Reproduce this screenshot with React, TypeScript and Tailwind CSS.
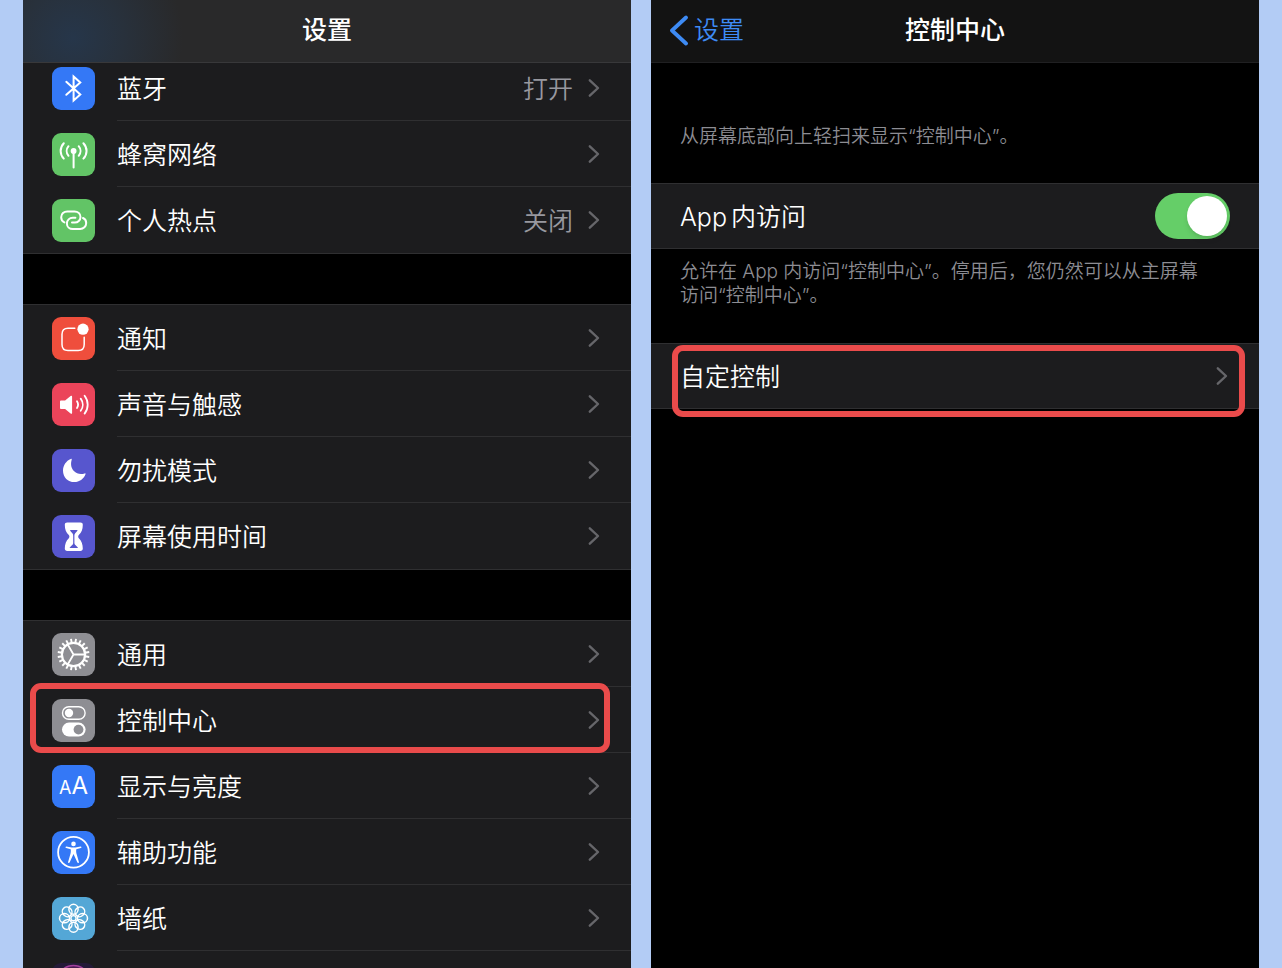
import type { ReactNode } from 'react';

const fontFamily = 'Inter, "Noto Sans CJK SC", sans-serif';

function Glyph({ children }: { children: ReactNode }) {
  return (
    <svg
      viewBox="0 0 43 43"
      className="size-full"
      fill="none"
      stroke="white"
      strokeWidth="2"
      strokeLinecap="round"
      strokeLinejoin="round"
      aria-hidden="true"
    >
      {children}
    </svg>
  );
}

function BluetoothGlyph() {
  return (
    <Glyph>
      <path d="M14.3 14.8 28.3 27.4 21.6 33.4V9.4l6.7 6.1-14 12.3" strokeLinejoin="miter" />
    </Glyph>
  );
}

function CellularGlyph() {
  return (
    <Glyph>
      <circle cx="21.6" cy="18" r="2.9" fill="white" stroke="none" />
      <path d="M21.6 18v16.4" />
      <path d="M16.5 13.2c-2.4 2.8-2.4 6.8 0 9.6M26.7 13.2c2.4 2.8 2.4 6.8 0 9.6" />
      <path d="M11.8 10.2c-4.2 4.4-4.2 11 0 15.4M31.4 10.2c4.2 4.4 4.2 11 0 15.4" />
    </Glyph>
  );
}

function HotspotGlyph() {
  const loop =
    'M12.4 23.4C10.3 22.6 9.2 20.6 9.2 18.3c0-3.4 2.7-5.900 6.100-5.900h7.200c3.400 0 6 2.400 6 5.600s-2.600 5.600-5.800 5.600H20';
  return (
    <Glyph>
      <path d={loop} />
      <path d={loop} transform="rotate(180 21.7 21.2)" />
    </Glyph>
  );
}

function NotificationGlyph() {
  return (
    <Glyph>
      <path d="M22.8 11.2H16c-4 0-6 2-6 6v10.2c0 4 2 6 6 6h10.200c4 0 6-2 6-6V20.200" strokeWidth="1.5" />
      <circle cx="31" cy="12.2" r="5.6" fill="white" stroke="none" />
    </Glyph>
  );
}

function SoundGlyph() {
  return (
    <Glyph>
      <path
        d="M9.3 17.4h3.8l5.5-4.3c.8-.6 1.5-.3 1.5.6v16.2c0 .9-.7 1.2-1.5.6l-5.5-4.5H9.3c-.9 0-1.3-.5-1.3-1.3v-6c0-.8.4-1.3 1.3-1.3z"
        fill="white"
        stroke="none"
      />
      <path
        d="M25 18.3c1.3 2 1.3 4.8 0 6.8M28.7 15.6c2.7 3.6 2.7 8.6 0 12.2M32.6 12.8c4.1 5.3 4.1 12.500 0 17.800"
        strokeWidth="1.8"
      />
    </Glyph>
  );
}

function MoonGlyph() {
  return (
    <Glyph>
      <path
        d="M18.8 9.9c.6-.2 1.1.3.9.9-1.4 4.6-.3 8.7 2.2 11.3 2.7 2.7 6.7 3.7 10.8 2.3.6-.2 1 .3.8.9C31.7 30 27.3 33.1 22.4 33.1 15.9 33.1 11 28.2 11 21.7c0-5.3 3.1-10 7.8-11.8z"
        fill="white"
        stroke="none"
      />
    </Glyph>
  );
}

function HourglassGlyph() {
  return (
    <Glyph>
      <path
        d="M15.2 7.4h13.2c1.5 0 2.4.9 2.4 2.3 0 4.6-1.3 7.9-4 10.4-.8.8-.8 2.3 0 3.1 2.7 2.5 4 5.8 4 10.4 0 1.4-.9 2.3-2.4 2.3H15.2c-1.5 0-2.4-.9-2.4-2.3 0-4.6 1.3-7.9 4-10.4.8-.8.8-2.3 0-3.1-2.7-2.5-4-5.8-4-10.4 0-1.4.9-2.3 2.4-2.3z"
        fill="white"
        stroke="none"
      />
      <path
        d="M18 14.9h7.6c-.4 1.3-1.5 2.3-2.4 3.4-.7.9-.8 1.7-.8 3.1v6.8c0 1.8 2.8 2.9 3.7 4.7h-8.6c.9-1.8 3.7-2.9 3.7-4.7v-6.8c0-1.4-.1-2.2-.8-3.1-.9-1.1-2-2.1-2.4-3.4z"
        fill="#5756ce"
        stroke="none"
      />
    </Glyph>
  );
}

function GearGlyph() {
  return (
    <Glyph>
      <circle cx="21.5" cy="21.5" r="11.6" strokeWidth="2.2" />
      {Array.from({ length: 20 }, (_, i) => (
        <path
          key={i}
          d="M21.5 10V5.6"
          strokeWidth="1.9"
          strokeLinecap="butt"
          transform={`rotate(${i * 18 + 9} 21.5 21.5)`}
        />
      ))}
      <path d="M21.5 21.5H33M21.5 21.5l-5.8-10M21.5 21.5l-5.8 10" strokeWidth="1.8" strokeLinecap="butt" />
    </Glyph>
  );
}

function ControlGlyph() {
  return (
    <Glyph>
      <rect x="10.5" y="7.7" width="22.6" height="12.6" rx="6.3" strokeWidth="1.4" />
      <circle cx="17" cy="14" r="4.2" fill="white" stroke="none" />
      <rect x="10" y="23.6" width="23.6" height="14" rx="7" fill="white" stroke="none" />
      <circle cx="26.5" cy="30.6" r="4.9" fill="#8e8e93" stroke="none" />
    </Glyph>
  );
}

function DisplayGlyph() {
  return (
    <span className="flex items-baseline justify-center leading-[41px] text-white" aria-hidden="true">
      <span className="text-[18px]">A</span>
      <span className="text-[24px]">A</span>
    </span>
  );
}

function AccessibilityGlyph() {
  return (
    <Glyph>
      <circle cx="21.5" cy="21.3" r="15.4" strokeWidth="1.8" />
      <circle cx="21.5" cy="12.9" r="2.3" fill="white" stroke="none" />
      <path
        d="M14.4 15.5l5.2 1h3.8l5.2-1c1-.1 1.2 1.3.3 1.5l-4.6 1.2c-.3 1.5-.1 3.4.3 4.9l2.3 7.9c.3 1-1.1 1.5-1.5.6l-3.9-8.5-3.9 8.5c-.4.9-1.8.4-1.5-.6l2.3-7.9c.4-1.5.6-3.4.3-4.9L14.1 17c-.9-.2-.7-1.6.3-1.5z"
        fill="white"
        stroke="none"
      />
    </Glyph>
  );
}

function WallpaperGlyph() {
  return (
    <Glyph>
      {[0, 45, 90, 135, 180, 225, 270, 315].map((angle) => (
        <ellipse
          key={angle}
          cx="21.5"
          cy="12.2"
          rx="4.6"
          ry="5"
          strokeWidth="1.5"
          transform={`rotate(${angle} 21.5 21.2)`}
        />
      ))}
      <circle cx="21.5" cy="21.2" r="2.6" strokeWidth="1.4" />
    </Glyph>
  );
}

function SiriGlyph() {
  return (
    <Glyph>
      <circle cx="21.5" cy="19" r="16.5" fill="#4a1a52" stroke="#a2409c" strokeWidth="1.5" />
    </Glyph>
  );
}

function Chevron() {
  return (
    <svg viewBox="0 0 12 20" className="h-5 w-3 shrink-0" fill="none" aria-hidden="true">
      <path
        d="M1.8 2.3 10 10l-8.2 7.7"
        stroke="#66666a"
        strokeWidth="2.4"
        strokeLinecap="round"
        strokeLinejoin="round"
      />
    </svg>
  );
}

type Item = {
  label: string;
  value?: string;
  color: string;
  glyph: ReactNode;
  highlighted?: boolean;
};

const connections: Item[] = [
  { label: '蓝牙', value: '打开', color: 'bg-[#3478f6]', glyph: <BluetoothGlyph /> },
  { label: '蜂窝网络', color: 'bg-[#62c466]', glyph: <CellularGlyph /> },
  { label: '个人热点', value: '关闭', color: 'bg-[#62c466]', glyph: <HotspotGlyph /> },
];

const alerts: Item[] = [
  { label: '通知', color: 'bg-[#ef4e3c]', glyph: <NotificationGlyph /> },
  { label: '声音与触感', color: 'bg-[#eb445a]', glyph: <SoundGlyph /> },
  { label: '勿扰模式', color: 'bg-[#5756ce]', glyph: <MoonGlyph /> },
  { label: '屏幕使用时间', color: 'bg-[#5756ce]', glyph: <HourglassGlyph /> },
];

const system: Item[] = [
  { label: '通用', color: 'bg-[#8e8e93]', glyph: <GearGlyph /> },
  { label: '控制中心', color: 'bg-[#8e8e93]', glyph: <ControlGlyph />, highlighted: true },
  { label: '显示与亮度', color: 'bg-[#3478f6]', glyph: <DisplayGlyph /> },
  { label: '辅助功能', color: 'bg-[#3478f6]', glyph: <AccessibilityGlyph /> },
  { label: '墙纸', color: 'bg-[#54a7d6]', glyph: <WallpaperGlyph /> },
  { label: '', color: 'bg-[#241a38]', glyph: <SiriGlyph /> },
];

function SettingsGroup({ items }: { items: Item[] }) {
  return (
    <ul className="border-y border-[#2f2f31] bg-[#1c1c1e]">
      {items.map((item, index) => (
        <li key={index} className="relative">
          <a
            href="#control-center"
            aria-label={item.label || 'Siri'}
            className="flex items-center pl-[29px] text-[25px] text-white"
          >
            <span className={`size-[43px] shrink-0 overflow-hidden rounded-[9px] ${item.color}`}>
              {item.glyph}
            </span>
            <span
              className={`ml-[22px] flex h-[66px] flex-1 items-center pr-[31px] ${
                index < items.length - 1 ? 'border-b border-[#2f2f31]' : ''
              }`}
            >
              <span className="flex-1 pt-1 font-[350]">{item.label}</span>
              {item.value && (
                <span className="mr-[15px] pt-1 font-[350] text-[#98989f]">{item.value}</span>
              )}
              <Chevron />
            </span>
          </a>
          {item.highlighted && (
            <span className="pointer-events-none absolute -top-1 right-[21px] bottom-0 left-[7px] z-10 rounded-[11px] border-6 border-[#ea4b4b]" />
          )}
        </li>
      ))}
    </ul>
  );
}

function SettingsScreen() {
  return (
    <section className="flex min-w-0 flex-1 flex-col overflow-hidden bg-black">
      <header className="z-20 flex h-[63px] shrink-0 items-center justify-center border-b border-[#38383a] bg-[#29292a] bg-[radial-gradient(circle_at_50px_38px,#26364a_0px,#28313c_50px,#29292a_110px)]">
        <h1 className="text-[25px] font-medium text-white">设置</h1>
      </header>
      <div className="-mt-[9px] flex flex-col gap-[50px]">
        <SettingsGroup items={connections} />
        <SettingsGroup items={alerts} />
        <SettingsGroup items={system} />
      </div>
    </section>
  );
}

function ControlCenterScreen() {
  return (
    <section id="control-center" className="min-w-0 flex-1 overflow-hidden bg-black">
      <header className="grid h-[63px] grid-cols-[1fr_auto_1fr] items-center border-b border-[#202022] bg-[#131313] text-[25px]">
        <a href="#settings" className="flex items-center gap-1 pl-[17px] font-[350] text-[#3e8bf4]">
          <svg viewBox="0 0 22 32" className="h-8 w-[22px]" fill="none" aria-hidden="true">
            <path
              d="M18 2.5 4 15.5l14 13"
              stroke="currentColor"
              strokeWidth="3.8"
              strokeLinecap="round"
              strokeLinejoin="round"
            />
          </svg>
          设置
        </a>
        <h2 className="font-medium text-white">控制中心</h2>
      </header>

      <p className="pt-[62px] pr-12 pb-[34px] pl-[29px] text-[19px] leading-6 font-[350] text-[#8d8d93]">
        从屏幕底部向上轻扫来显示“控制中心”。
      </p>

      <label className="flex h-[66px] items-center justify-between border-y border-[#2f2f31] bg-[#1c1c1e] px-[29px] text-[25px] text-white">
        <span className="pt-1 font-[350]">
          <span className="mr-1">App</span>内访问
        </span>
        <input
          type="checkbox"
          role="switch"
          defaultChecked
          className="flex h-[46px] w-[75px] appearance-none items-center rounded-full bg-[#39393d] px-[3px] before:size-10 before:rounded-full before:bg-white before:shadow-md before:content-[''] checked:justify-end checked:bg-[#65ce68]"
        />
      </label>

      <p className="pt-[11px] pr-12 pb-[35px] pl-[29px] text-[19px] leading-6 font-[350] text-[#8d8d93]">
        允许在 App 内访问“控制中心”。停用后，您仍然可以从主屏幕访问“控制中心”。
      </p>

      <div className="relative">
        <a
          href="#customize"
          className="flex h-[66px] items-center justify-between border-y border-[#2f2f31] bg-[#1c1c1e] pr-[31px] pl-[29px] text-[25px] text-white"
        >
          <span className="pt-1 font-[350]">自定控制</span>
          <Chevron />
        </a>
        <span className="pointer-events-none absolute top-[2px] right-[14px] -bottom-2 left-[21px] rounded-[11px] border-6 border-[#ea4b4b]" />
      </div>
    </section>
  );
}

export default function App() {
  return (
    <main
      lang="zh-CN"
      className="flex h-screen gap-5 overflow-hidden bg-[#b3ccf5] px-[23px]"
      style={{ fontFamily }}
    >
      <SettingsScreen />
      <ControlCenterScreen />
    </main>
  );
}
